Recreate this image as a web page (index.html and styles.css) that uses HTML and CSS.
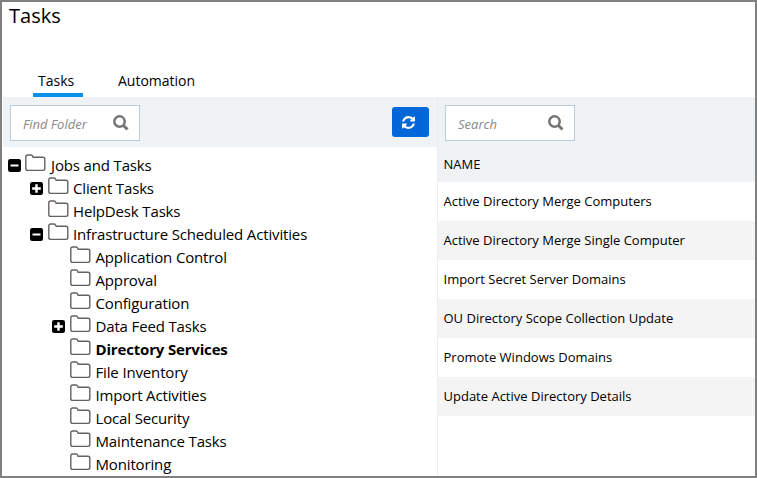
FILE: index.html
```html
<!DOCTYPE html>
<html lang="en">
<head>
<meta charset="utf-8">
<title>Tasks</title>
<link rel="stylesheet" href="styles.css">
</head>
<body>
<svg class="defs" aria-hidden="true">
  <symbol id="folder" viewBox="0 0 21 18"><path d="M.8 14.6V2.8Q.8 1 2.6 1H6.2Q7.2 1 7.6 2.1L8.1 3.3H18Q19.8 3.3 19.8 5.1V14.6Q19.8 16.4 18 16.4H2.6Q.8 16.4 .8 14.6Z" fill="#fff" stroke="#666064" stroke-width="1.4"/></symbol>
  <symbol id="minus" viewBox="0 0 13 13"><rect width="13" height="13" rx="2.2"/><path d="M2.5 6.5H10.5" stroke="#fff" stroke-width="2"/></symbol>
  <symbol id="plus" viewBox="0 0 13 13"><rect width="13" height="13" rx="2.2"/><path d="M2.2 6.5H10.8M6.5 2.2V10.8" stroke="#fff" stroke-width="2.4"/></symbol>
  <symbol id="search" viewBox="0 0 16 16"><circle cx="6.5" cy="6.5" r="5.2" fill="none" stroke="#757575" stroke-width="2.5"/><path d="M10.2 10.2L14.5 14.5" stroke="#757575" stroke-width="3"/></symbol>
</svg>
<div class="window">
  <h1 class="title">Tasks</h1>
  <nav class="tabs">
    <a class="tab active"><span>Tasks</span></a>
    <a class="tab"><span>Automation</span></a>
  </nav>
  <main class="panes">
    <section class="left">
      <div class="toolbar">
        <div class="search"><span class="hint">Find Folder</span><svg class="glass"><use href="#search"/></svg></div>
        <button class="refresh" aria-label="Refresh"><svg viewBox="0 0 1536 1536"><path fill="#fff" d="M1511 928q0 5-1 7-64 268-268 434.500T764 1536q-146 0-282.500-55T238 1324l-129 129q-19 19-45 19t-45-19-19-45V960q0-26 19-45t45-19h448q26 0 45 19t19 45-19 45l-137 137q71 66 161 102t187 36q134 0 250-65t186-179q11-17 53-117 8-23 30-23h192q13 0 22.500 9.500t9.500 22.500zm25-800v448q0 26-19 45t-45 19h-448q-26 0-45-19t-19-45 19-45l138-138Q969 256 768 256q-134 0-250 65T332 500q-11 17-53 117-8 23-30 23H50q-13 0-22.500-9.500T18 608v-7q65-268 270-434.500T768 0q146 0 284 55.500T1297 212l130-129q19-19 45-19t45 19 19 45z"/></svg></button>
      </div>
      <ul class="tree">
        <li><svg class="toggle"><use href="#minus"/></svg><svg class="folder"><use href="#folder"/></svg><span>Jobs and Tasks</span></li>
        <li class="l1"><svg class="toggle"><use href="#plus"/></svg><svg class="folder"><use href="#folder"/></svg><span>Client Tasks</span></li>
        <li class="l1"><i class="toggle"></i><svg class="folder"><use href="#folder"/></svg><span>HelpDesk Tasks</span></li>
        <li class="l1"><svg class="toggle"><use href="#minus"/></svg><svg class="folder"><use href="#folder"/></svg><span>Infrastructure Scheduled Activities</span></li>
        <li class="l2"><i class="toggle"></i><svg class="folder"><use href="#folder"/></svg><span>Application Control</span></li>
        <li class="l2"><i class="toggle"></i><svg class="folder"><use href="#folder"/></svg><span>Approval</span></li>
        <li class="l2"><i class="toggle"></i><svg class="folder"><use href="#folder"/></svg><span>Configuration</span></li>
        <li class="l2"><svg class="toggle"><use href="#plus"/></svg><svg class="folder"><use href="#folder"/></svg><span>Data Feed Tasks</span></li>
        <li class="l2 selected"><i class="toggle"></i><svg class="folder"><use href="#folder"/></svg><span>Directory Services</span></li>
        <li class="l2"><i class="toggle"></i><svg class="folder"><use href="#folder"/></svg><span>File Inventory</span></li>
        <li class="l2"><i class="toggle"></i><svg class="folder"><use href="#folder"/></svg><span>Import Activities</span></li>
        <li class="l2"><i class="toggle"></i><svg class="folder"><use href="#folder"/></svg><span>Local Security</span></li>
        <li class="l2"><i class="toggle"></i><svg class="folder"><use href="#folder"/></svg><span>Maintenance Tasks</span></li>
        <li class="l2"><i class="toggle"></i><svg class="folder"><use href="#folder"/></svg><span>Monitoring</span></li>
      </ul>
    </section>
    <section class="right">
      <div class="toolbar">
        <div class="search"><span class="hint">Search</span><svg class="glass"><use href="#search"/></svg></div>
      </div>
      <div class="head">NAME</div>
      <div class="row">Active Directory Merge Computers</div>
      <div class="row">Active Directory Merge Single Computer</div>
      <div class="row">Import Secret Server Domains</div>
      <div class="row">OU Directory Scope Collection Update</div>
      <div class="row">Promote Windows Domains</div>
      <div class="row">Update Active Directory Details</div>
    </section>
  </main>
</div>
</body>
</html>
```
FILE: styles.css
```css
* { box-sizing: border-box; }
body { margin: 0; background: #fff; color: #000; font-family: "Open Sans", "Noto Sans", sans-serif; }
.defs { display: none; }
.window { width: 757px; height: 478px; border: 2px solid #808080; overflow: hidden; display: flex; flex-direction: column; }
.title { margin: 0; padding-left: 7px; height: 64px; font-size: 20px; line-height: 27px; font-weight: 400; }
.tabs { display: flex; gap: 30px; height: 31px; padding-left: 31px; }
.tab { height: 31px; padding: 4px 5px 0; font-size: 14px; line-height: 21px; }
.tab.active { width: 50px; border-bottom: 4px solid #0a92ea; }
.panes { display: flex; flex: 1; min-height: 0; padding-left: 1px; }
.left { width: 434px; overflow: hidden; }
.right { flex: 1; border-left: 1px solid #ebedf0; }
.toolbar { display: flex; justify-content: space-between; height: 50px; padding: 8px 8px 0 7px; background: #eff3f6; }
.search { display: flex; justify-content: space-between; width: 130px; height: 36px; padding: 0 10px 0 12px; border: 1px solid #bccbd8; background: #fff; }
.hint { color: #888; font-size: 13px; font-style: italic; line-height: 37px; }
.glass { width: 16px; height: 16px; margin-top: 9px; }
.refresh { width: 37px; height: 30px; margin-top: 2px; padding: 0 4px 0 0; border: 0; border-radius: 3px; background: #0367d9; display: flex; align-items: center; justify-content: center; }
.refresh svg { width: 13px; height: 13px; }
.tree { list-style: none; margin: 0; padding: 7px 0 0 5px; }
.tree li { display: flex; height: 23px; font-size: 15px; line-height: 23px; letter-spacing: -0.15px; white-space: nowrap; }
.toggle { flex: none; width: 13px; height: 13px; margin-top: 5px; }
.folder { flex: none; width: 21px; height: 18px; margin: 0 5px 0 4px; }
.tree .l1 { padding-left: 22px; }
.tree .l1 .folder { margin: 0 4.5px; }
.tree .l2 { padding-left: 44px; }
.tree .l2 .folder { margin: 0 4.5px 0 5px; }
.tree .selected { font-weight: 700; letter-spacing: -0.17px; }
.head, .row { padding-left: 5.5px; font-size: 13px; }
.head { height: 35px; line-height: 35px; background: #eff3f6; }
.row { height: 39px; line-height: 39px; }
.row:nth-child(even) { background: #f4f4f4; }
```
